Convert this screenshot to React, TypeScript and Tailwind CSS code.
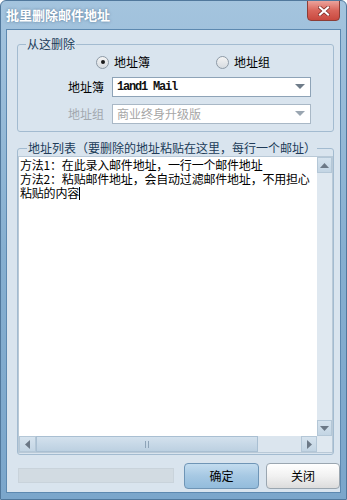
const ff = "font-['Noto_Sans_CJK_SC',sans-serif]";

function Radio({ checked, label }: { checked: boolean; label: string }) {
  return (
    <div className="flex items-center gap-[5px]">
      <div className="w-[13px] h-[13px] rounded-full border border-[#8e9aa6] bg-gradient-to-b from-[#f4f4f4] to-[#d6dbe0] flex items-center justify-center">
        {checked && <div className="w-[4px] h-[4px] rounded-full bg-[#1a1a1a]" />}
      </div>
      <span className="text-[12px] leading-[16px] text-black">{label}</span>
    </div>
  );
}

function Arrow({ color }: { color: string }) {
  return (
    <svg width="10" height="6" viewBox="0 0 10 6" className="mr-[5px]">
      <polygon points="0,0 10,0 5,5" fill={color} />
    </svg>
  );
}

function ComboRow({ label, value, disabled }: { label: string; value: string; disabled?: boolean }) {
  return (
    <div className="flex items-center pl-[50px] h-[20px]">
      <span className={`w-[36px] text-[12px] leading-[16px] ${disabled ? "text-[#a2a8ae]" : "text-black"}`}>{label}</span>
      <div
        className={`ml-[8px] w-[199px] h-[20px] flex items-center justify-between bg-white border ${
          disabled ? "border-[#a9b8c6]" : "border-[#8ea3b7]"
        }`}
      >
        {disabled ? (
          <span className="pl-[4px] text-[12px] leading-[16px] text-[#a6a6a6]">{value}</span>
        ) : (
          <span className="pl-[4px] text-[12px] leading-[16px] text-[#111] font-['Liberation_Mono',monospace] tracking-[-1.2px] font-semibold">
            {value}
          </span>
        )}
        <Arrow color={disabled ? "#9aa6b1" : "#6f7c89"} />
      </div>
    </div>
  );
}

function VTri({ up }: { up: boolean }) {
  return (
    <svg width="9" height="5" viewBox="0 0 9 5">
      <polygon points={up ? "0,5 9,5 4.5,0" : "0,0 9,0 4.5,5"} fill="#6b7886" />
    </svg>
  );
}
function HTri({ left }: { left: boolean }) {
  return (
    <svg width="5" height="9" viewBox="0 0 5 9">
      <polygon points={left ? "5,0 5,9 0,4.5" : "0,0 0,9 5,4.5"} fill="#6b7886" />
    </svg>
  );
}

export default function App() {
  return (
    <div className={`w-[347px] h-[500px] flex flex-col bg-gradient-to-b from-[#a4c4de] via-[#86afd0] to-[#7ba6cb] border border-[#51789c] rounded-t-[6px] overflow-hidden ${ff}`}>
      {/* title bar */}
      <div className="h-[28px] flex items-start justify-between pl-[5px] pr-[6px]">
        <span className="mt-[6px] text-[13px] leading-[16px] font-bold text-white [text-shadow:0_0_3px_rgba(40,70,100,0.6)]">批里删除邮件地址</span>
        <div className="-mt-[1px] w-[33px] h-[21px] rounded-b-[4px] border border-[#8c3d36] bg-gradient-to-b from-[#eba39c] via-[#d9655b] to-[#c9493f] flex items-center justify-center">
          <svg width="12" height="10" viewBox="0 0 12 10">
            <path d="M2 1.5 L10 8.5 M10 1.5 L2 8.5" stroke="#7a2a25" strokeWidth="3.6" strokeLinecap="square" />
            <path d="M2 1.5 L10 8.5 M10 1.5 L2 8.5" stroke="#ffffff" strokeWidth="2.2" strokeLinecap="square" />
          </svg>
        </div>
      </div>

      {/* body */}
      <div className="mx-[5px] h-[464px] border border-[#5d89b0] bg-[#d9e4ee] flex flex-col">
        {/* group 1 */}
        <fieldset className="mt-[6px] ml-[10px] mr-[6px] h-[96px] border border-[#a3bbd0] rounded-[3px] flex flex-col">
          <legend className="ml-[8px] px-[1px] text-[12px] leading-[16px] text-[#203b58]">从这删除</legend>
          <div className="h-[20px] flex items-center pl-[78px]">
            <div className="w-[120px]">
              <Radio checked label="地址簿" />
            </div>
            <Radio checked={false} label="地址组" />
          </div>
          <div className="mt-[5px] flex flex-col gap-[7px]">
            <ComboRow label="地址簿" value="1and1 Mail" />
            <ComboRow label="地址组" value="商业终身升级版" disabled />
          </div>
        </fieldset>

        {/* group 2 */}
        <fieldset className="mt-[8px] ml-[10px] mr-[6px] h-[315px] border border-[#a3bbd0] rounded-[3px] flex flex-col">
          <legend className="ml-[9px] px-[1px] text-[12px] leading-[16px] text-[#203b58]">
            地址列表（要删除的地址粘贴在这里，每行一个邮址）
          </legend>
          <div className="h-[297px] border border-[#b9c9d7] bg-white grid grid-cols-[1fr_15px] grid-rows-[1fr_16px]">
            <div className="pl-[1px] pt-[1px] text-[12px] leading-[14px] tracking-[-0.2px] text-black whitespace-nowrap overflow-hidden">
              <div className="h-[14px]">方法1：在此录入邮件地址，一行一个邮件地址</div>
              <div className="h-[14px]">方法2：粘贴邮件地址，会自动过滤邮件地址，不用担心</div>
              <div className="h-[14px] flex items-center">
                粘贴的内容<span className="inline-block w-[1px] h-[13px] bg-black" />
              </div>
            </div>
            {/* vertical scrollbar */}
            <div className="bg-[#dfe8f0] flex flex-col justify-between">
              <div className="h-[16px] bg-gradient-to-b from-[#d6e3ee] to-[#c3d5e4] border border-[#b4c7d7] flex items-center justify-center">
                <VTri up />
              </div>
              <div className="h-[16px] bg-gradient-to-b from-[#d6e3ee] to-[#c3d5e4] border border-[#b4c7d7] flex items-center justify-center">
                <VTri up={false} />
              </div>
            </div>
            {/* horizontal scrollbar */}
            <div className="bg-[#dbe5ee] flex items-stretch">
              <div className="w-[17px] bg-gradient-to-b from-[#d6e3ee] to-[#c3d5e4] border border-[#b4c7d7] flex items-center justify-center">
                <HTri left />
              </div>
              <div className="w-[222px] bg-gradient-to-b from-[#d3e1ed] to-[#bcd0e1] border border-[#a9bfd2] flex items-center justify-center gap-[2px]">
                <div className="w-[1px] h-[7px] bg-[#8ea4b8]" />
                <div className="w-[1px] h-[7px] bg-[#8ea4b8]" />
              </div>
              <div className="flex-1" />
              <div className="w-[16px] bg-gradient-to-b from-[#d6e3ee] to-[#c3d5e4] border border-[#b4c7d7] flex items-center justify-center">
                <HTri left={false} />
              </div>
            </div>
            <div className="bg-[#dfe8f0]" />
          </div>
        </fieldset>

        {/* bottom */}
        <div className="flex-1 flex items-start pt-[8px]">
          <div className="ml-[11px] mt-[5px] w-[156px] h-[15px] bg-[#d2dbe2] border border-[#c9d3db]" />
          <button className="ml-[10px] w-[75px] h-[26px] rounded-[4px] border border-[#6f95b6] bg-gradient-to-b from-[#c3dcef] via-[#a6c8e3] to-[#93bcdc] text-[12px] leading-[16px] text-black">
            确定
          </button>
          <button className="ml-[7px] w-[74px] h-[26px] rounded-[4px] border border-[#9aa6b0] bg-gradient-to-b from-[#ffffff] via-[#f1f1f1] to-[#dcdcdc] text-[12px] leading-[16px] text-black">
            关闭
          </button>
        </div>
      </div>
    </div>
  );
}
